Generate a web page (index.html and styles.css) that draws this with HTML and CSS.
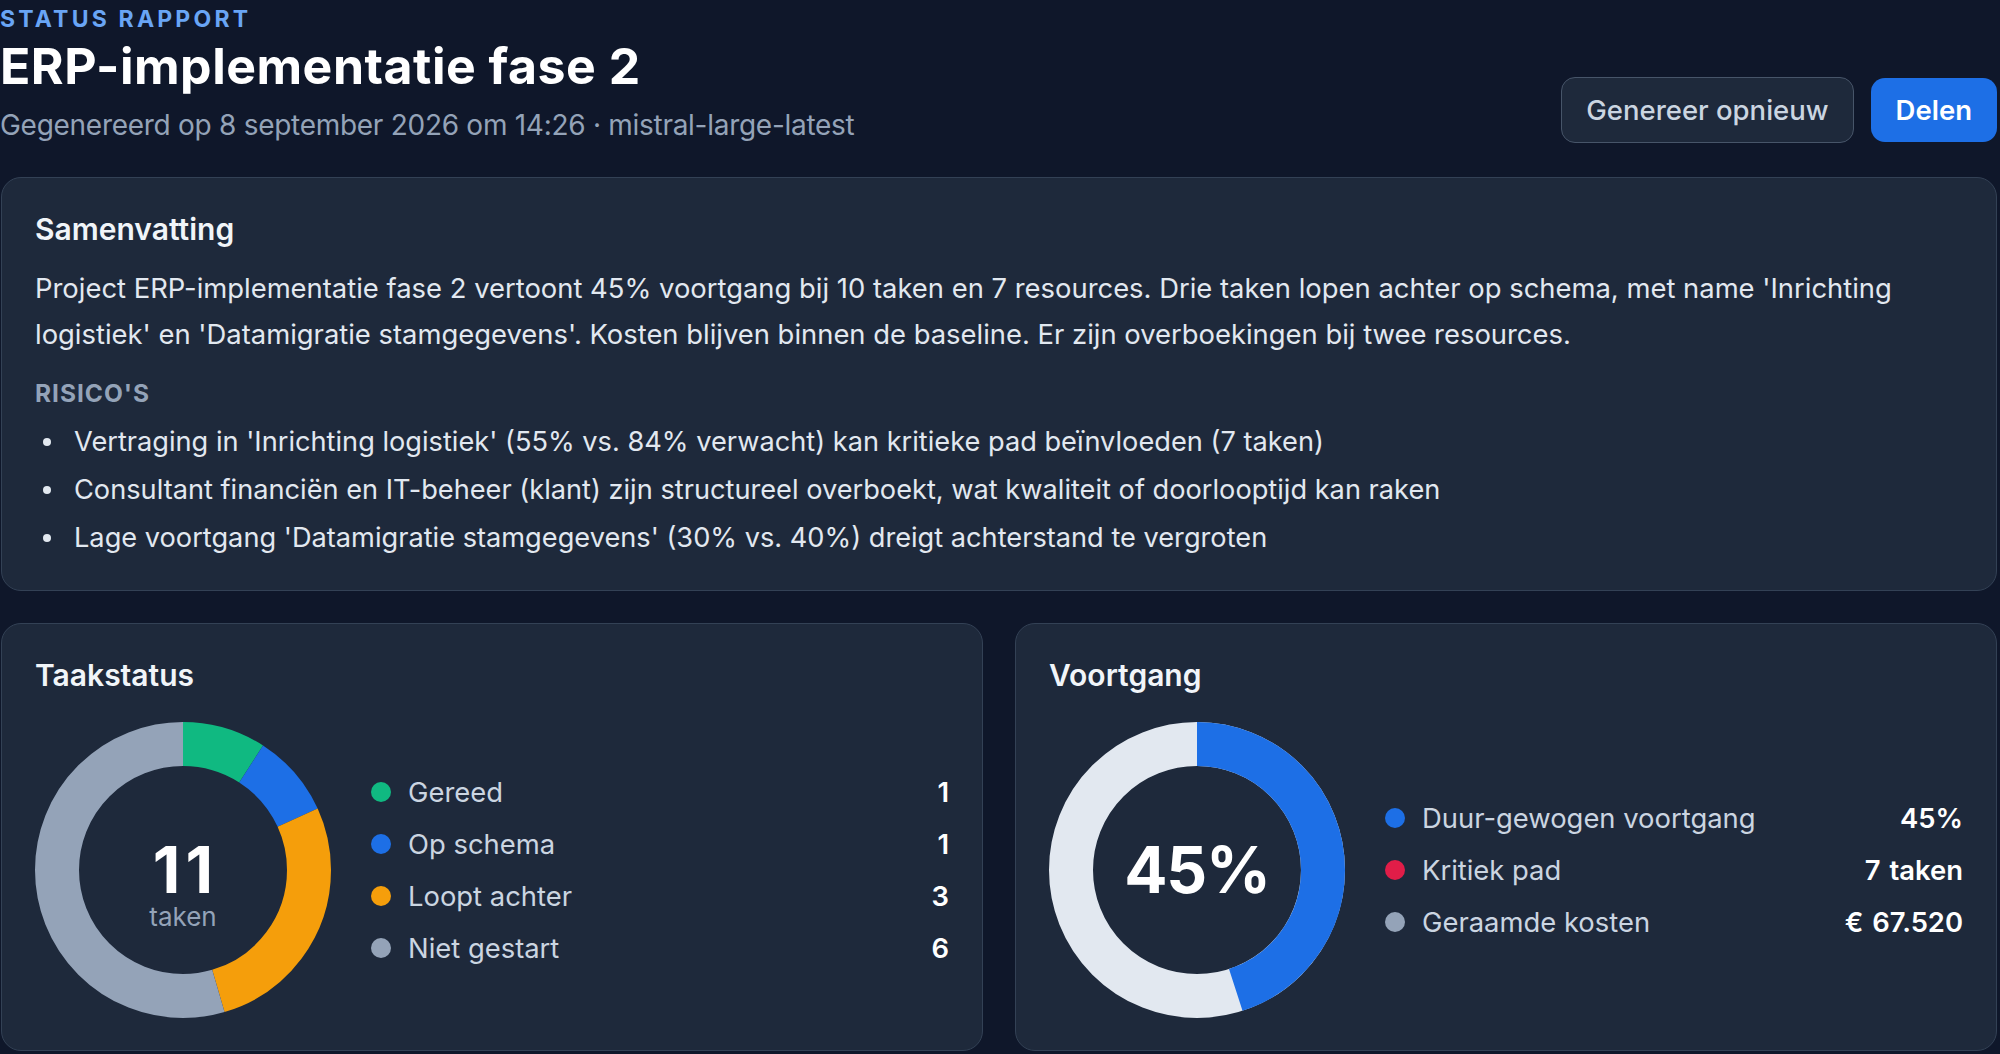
FILE: index.html
```html
<!DOCTYPE html>
<html lang="nl">
<head>
<meta charset="utf-8">
<title>Status rapport</title>
<link rel="stylesheet" href="styles.css">
</head>
<body>
<div class="page">
  <header class="top">
    <div class="titles">
      <div class="eyebrow">STATUS RAPPORT</div>
      <h1 class="title">ERP-implementatie fase 2</h1>
      <div class="meta">Gegenereerd op 8 september 2026 om 14:26 · mistral-large-latest</div>
    </div>
    <div class="actions">
      <button class="btn btn-ghost">Genereer opnieuw</button>
      <button class="btn btn-primary">Delen</button>
    </div>
  </header>

  <section class="card summary">
    <h2 class="card-title">Samenvatting</h2>
    <p class="summary-text">Project ERP-implementatie fase 2 vertoont 45% voortgang bij 10 taken en 7 resources. Drie taken lopen achter op schema, met name 'Inrichting logistiek' en 'Datamigratie stamgegevens'. Kosten blijven binnen de baseline. Er zijn overboekingen bij twee resources.</p>
    <div class="label">RISICO'S</div>
    <ul class="risks">
      <li>Vertraging in 'Inrichting logistiek' (55% vs. 84% verwacht) kan kritieke pad beïnvloeden (7 taken)</li>
      <li>Consultant financiën en IT-beheer (klant) zijn structureel overboekt, wat kwaliteit of doorlooptijd kan raken</li>
      <li>Lage voortgang 'Datamigratie stamgegevens' (30% vs. 40%) dreigt achterstand te vergroten</li>
    </ul>
  </section>

  <div class="grid">
    <section class="card">
      <h2 class="card-title">Taakstatus</h2>
      <div class="chart-row">
        <div class="donut">
          <svg class="donut-svg" viewBox="0 0 296 296" width="296" height="296">
            <g transform="rotate(-90 148 148)" fill="none" stroke-width="44">
              <circle cx="148" cy="148" r="126" stroke="#10b981" stroke-dasharray="71.97 791.68" stroke-dashoffset="0"/>
              <circle cx="148" cy="148" r="126" stroke="#1d6fe6" stroke-dasharray="71.97 791.68" stroke-dashoffset="-71.97"/>
              <circle cx="148" cy="148" r="126" stroke="#f59e0b" stroke-dasharray="215.91 791.68" stroke-dashoffset="-143.94"/>
              <circle cx="148" cy="148" r="126" stroke="#94a3b8" stroke-dasharray="431.83 791.68" stroke-dashoffset="-359.85"/>
            </g>
          </svg>
          <div class="donut-center with-sub">
            <div class="big count">11</div>
            <div class="sub">taken</div>
          </div>
        </div>
        <ul class="legend">
          <li><span class="dot green"></span><span class="lg-label">Gereed</span><span class="lg-val">1</span></li>
          <li><span class="dot blue"></span><span class="lg-label">Op schema</span><span class="lg-val">1</span></li>
          <li><span class="dot orange"></span><span class="lg-label">Loopt achter</span><span class="lg-val">3</span></li>
          <li><span class="dot gray"></span><span class="lg-label">Niet gestart</span><span class="lg-val">6</span></li>
        </ul>
      </div>
    </section>

    <section class="card">
      <h2 class="card-title">Voortgang</h2>
      <div class="chart-row">
        <div class="donut">
          <svg class="donut-svg" viewBox="0 0 296 296" width="296" height="296">
            <g transform="rotate(-90 148 148)" fill="none" stroke-width="44">
              <circle cx="148" cy="148" r="126" stroke="#e2e8f0"/>
              <circle cx="148" cy="148" r="126" stroke="#1d6fe6" stroke-dasharray="356.26 791.68" stroke-dashoffset="0"/>
            </g>
          </svg>
          <div class="donut-center">
            <div class="big">45%</div>
          </div>
        </div>
        <ul class="legend">
          <li><span class="dot blue"></span><span class="lg-label">Duur-gewogen voortgang</span><span class="lg-val">45%</span></li>
          <li><span class="dot red"></span><span class="lg-label">Kritiek pad</span><span class="lg-val">7 taken</span></li>
          <li><span class="dot gray"></span><span class="lg-label">Geraamde kosten</span><span class="lg-val">€&nbsp;67.520</span></li>
        </ul>
      </div>
    </section>
  </div>
</div>
</body>
</html>
```

FILE: styles.css
```css
* { box-sizing: border-box; }

html, body {
  margin: 0;
  padding: 0;
  background: #0f172a;
}

body {
  font-family: Inter, "Noto Sans", "Liberation Sans", sans-serif;
  color: #e2e8f0;
  overflow: hidden;
}

.page {
  width: 1997px;
  padding: 5px 0 0 1px;
  display: flex;
  flex-direction: column;
}

.top {
  display: flex;
  justify-content: space-between;
  align-items: flex-end;
  margin-left: -1px;
}

.titles {
  display: flex;
  flex-direction: column;
}

.eyebrow {
  font-size: 23px;
  line-height: 28px;
  font-weight: 700;
  letter-spacing: 3.2px;
  color: #69a5f5;
}

.title {
  margin: 4px 0 0;
  font-size: 50px;
  line-height: 58px;
  font-weight: 700;
  letter-spacing: 0.01em;
  color: #ffffff;
}

.meta {
  margin-top: 12px;
  font-size: 28px;
  line-height: 36px;
  letter-spacing: -0.28px;
  color: #94a3b8;
}

.actions {
  display: flex;
  align-items: center;
  gap: 17px;
}

.btn {
  font-family: inherit;
  font-size: 27.5px;
  line-height: 34px;
  border-radius: 14px;
  cursor: pointer;
}

.btn-ghost {
  background: #1e293b;
  border: 1.5px solid #475569;
  color: #cbd5e1;
  font-weight: 500;
  padding: 15px 24px;
}

.btn-primary {
  background: #1d6fe6;
  border: none;
  color: #ffffff;
  font-weight: 600;
  padding: 15px 25px;
}

.card {
  background: #1e293b;
  border: 1.5px solid #334155;
  border-radius: 20px;
  padding: 32px 33px;
}

.summary {
  margin-top: 34px;
}

.card-title {
  margin: 0;
  font-size: 30px;
  line-height: 38px;
  font-weight: 600;
  color: #f1f5f9;
}

.summary-text {
  margin: 17px 0 0;
  font-size: 27.4px;
  line-height: 46px;
  color: #e2e8f0;
}

.label {
  margin-top: 21px;
  font-size: 24.5px;
  line-height: 30px;
  font-weight: 700;
  letter-spacing: 0.04em;
  color: #94a3b8;
}

.risks {
  list-style: none;
  margin: 14px 0 0;
  padding: 0;
  display: flex;
  flex-direction: column;
  gap: 8px;
}

.risks li {
  display: flex;
  align-items: center;
  font-size: 27.2px;
  line-height: 40px;
  color: #e2e8f0;
}

.risks li::before {
  content: "";
  flex: none;
  width: 8px;
  height: 8px;
  border-radius: 50%;
  background: #e2e8f0;
  margin: 0 23px 0 8px;
}

.grid {
  margin-top: 32px;
  display: grid;
  grid-template-columns: 1fr 1fr;
  gap: 32px;
}

.chart-row {
  margin-top: 28px;
  display: flex;
  align-items: center;
  gap: 40px;
}

.donut {
  flex: none;
  width: 296px;
  height: 296px;
  display: grid;
}

.donut-svg,
.donut-center {
  grid-area: 1 / 1;
}

.donut-svg {
  display: block;
}

.donut-center {
  display: flex;
  flex-direction: column;
  align-items: center;
  justify-content: center;
}

.donut-center.with-sub {
  padding-top: 30px;
}

.big {
  font-size: 64px;
  line-height: 64px;
  font-weight: 700;
  color: #ffffff;
  letter-spacing: -0.02em;
}

.big.count {
  letter-spacing: 0.08em;
  padding-left: 0.08em;
}

.sub {
  font-size: 26px;
  line-height: 30px;
  color: #94a3b8;
}

.legend {
  flex: 1;
  list-style: none;
  margin: 0;
  padding: 0;
  display: flex;
  flex-direction: column;
  gap: 12px;
}

.legend li {
  display: flex;
  align-items: center;
  font-size: 27.4px;
  line-height: 40px;
}

.dot {
  flex: none;
  width: 20px;
  height: 20px;
  border-radius: 50%;
  margin-right: 17px;
}

.dot.green { background: #10b981; }
.dot.blue { background: #1d6fe6; }
.dot.orange { background: #f59e0b; }
.dot.gray { background: #94a3b8; }
.dot.red { background: #e11d48; }

.lg-label {
  flex: 1;
  color: #cbd5e1;
}

.lg-val {
  font-weight: 600;
  color: #ffffff;
  word-spacing: 2px;
}
```
